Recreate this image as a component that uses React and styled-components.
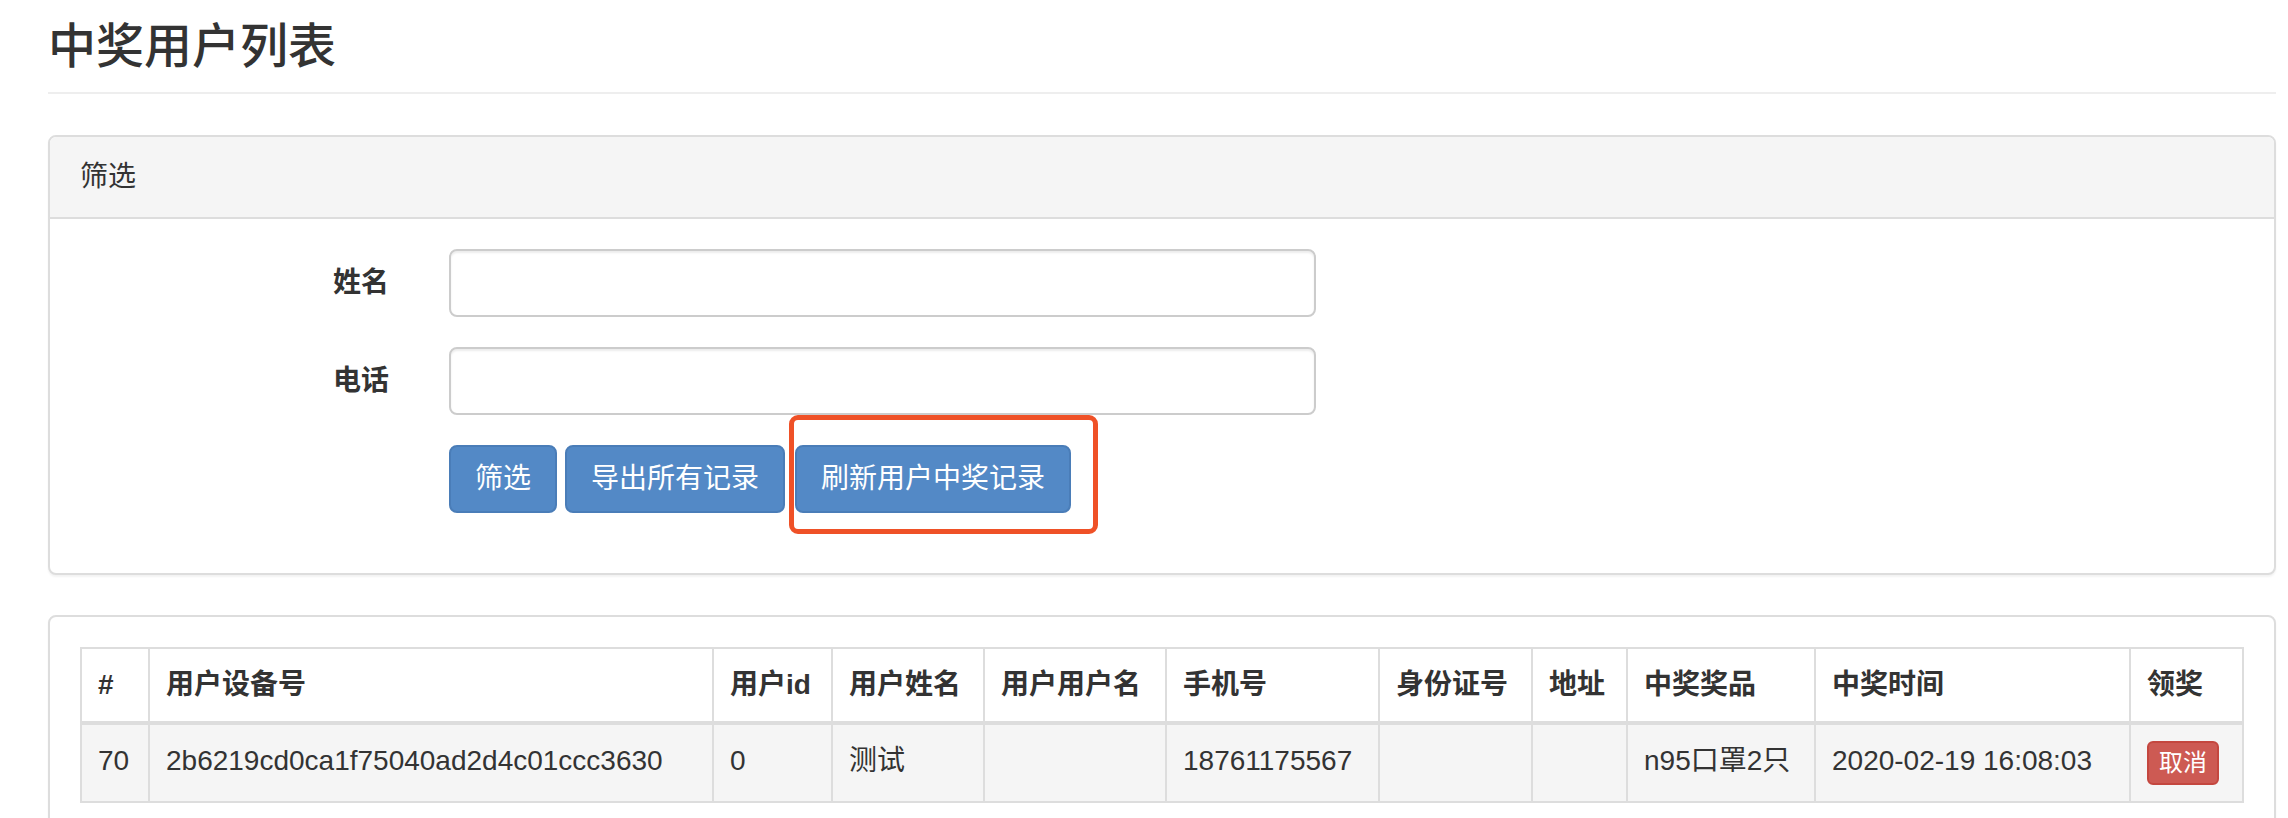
import React from "react";
import styled, { createGlobalStyle } from "styled-components";

const GlobalStyle = createGlobalStyle`
  html, body {
    margin: 0;
    padding: 0;
    background: #fff;
  }
  body {
    font-family: "Liberation Sans", "Noto Sans CJK SC", sans-serif;
    font-size: 28px;
    line-height: 40px;
    color: #333;
  }
  * {
    box-sizing: border-box;
  }
`;

const Page = styled.div`
  padding: 20px 12px 0 48px;
`;

const PageHeader = styled.h3`
  margin: 0 0 41px;
  padding-bottom: 19px;
  border-bottom: 2px solid #eee;
  font-size: 48px;
  line-height: 53px;
  font-weight: 500;
  color: #333;
`;

const Panel = styled.div`
  background: #fff;
  border: 2px solid #ddd;
  border-radius: 8px;
  box-shadow: 0 2px 2px rgba(0, 0, 0, 0.05);
  margin-bottom: 40px;
`;

const PanelHeading = styled.div`
  padding: 20px 30px;
  background: #f5f5f5;
  border-bottom: 2px solid #ddd;
  border-radius: 6px 6px 0 0;
`;

const PanelBody = styled.div`
  padding: 30px;
`;

const FormRow = styled.div`
  display: flex;
  align-items: center;
  margin-bottom: 30px;
`;

const Label = styled.label`
  width: 309px;
  text-align: right;
  font-weight: 700;
`;

const Input = styled.input`
  margin-left: 60px;
  width: 867px;
  height: 68px;
  padding: 12px 24px;
  font: inherit;
  color: #555;
  background: #fff;
  border: 2px solid #ccc;
  border-radius: 8px;
  box-shadow: inset 0 2px 2px rgba(0, 0, 0, 0.075);
  outline: none;
`;

const Actions = styled.div`
  display: flex;
  gap: 8px;
  margin-left: 369px;
  margin-bottom: 30px;
`;

const Button = styled.button`
  height: 68px;
  padding: 12px 24px;
  font: inherit;
  line-height: 40px;
  color: #fff;
  background: #5389c6;
  border: 2px solid #4a7db8;
  border-radius: 8px;
  cursor: pointer;
  white-space: nowrap;
`;

const Highlight = styled.div`
  position: relative;
  margin-left: 2px;

  &::after {
    content: "";
    position: absolute;
    left: -6px;
    right: -27px;
    top: -30px;
    bottom: -21px;
    border: 5px solid #ef5127;
    border-radius: 9px;
    pointer-events: none;
  }
`;

const Table = styled.table`
  width: 100%;
  table-layout: fixed;
  border-collapse: collapse;
  border: 2px solid #ddd;
`;

const Col = styled.col`
  width: ${(p) => p.$w}px;
`;

const Th = styled.th`
  padding: 16px;
  text-align: left;
  vertical-align: bottom;
  font-weight: 700;
  border: 2px solid #ddd;
  border-bottom-width: 4px;
  white-space: nowrap;
  overflow: hidden;
`;

const Row = styled.tr`
  background: #f5f5f5;
`;

const Td = styled.td`
  padding: 16px;
  vertical-align: top;
  border: 2px solid #ddd;
  white-space: nowrap;
  overflow: hidden;
`;

const SmallDanger = styled.button`
  display: inline-block;
  height: 44px;
  padding: 2px 10px;
  font: inherit;
  font-size: 24px;
  line-height: 36px;
  color: #fff;
  background: #cd5a53;
  border: 2px solid #c4473f;
  border-radius: 6px;
  vertical-align: top;
  cursor: pointer;
`;

const columns = [
  { title: "#", w: 68 },
  { title: "用户设备号", w: 564 },
  { title: "用户id", w: 119 },
  { title: "用户姓名", w: 152 },
  { title: "用户用户名", w: 182 },
  { title: "手机号", w: 213 },
  { title: "身份证号", w: 153 },
  { title: "地址", w: 95 },
  { title: "中奖奖品", w: 188 },
  { title: "中奖时间", w: 315 },
  { title: "领奖", w: 113 },
];

const winners = [
  {
    id: 70,
    device: "2b6219cd0ca1f75040ad2d4c01ccc3630",
    userId: 0,
    name: "测试",
    username: "",
    phone: "18761175567",
    idCard: "",
    address: "",
    prize: "n95口罩2只",
    time: "2020-02-19 16:08:03",
  },
];

const App = () => (
  <Page>
    <GlobalStyle />
    <PageHeader>中奖用户列表</PageHeader>

    <Panel>
      <PanelHeading>筛选</PanelHeading>
      <PanelBody>
        <FormRow>
          <Label>姓名</Label>
          <Input type="text" />
        </FormRow>
        <FormRow>
          <Label>电话</Label>
          <Input type="text" />
        </FormRow>
        <Actions>
          <Button>筛选</Button>
          <Button>导出所有记录</Button>
          <Highlight>
            <Button>刷新用户中奖记录</Button>
          </Highlight>
        </Actions>
      </PanelBody>
    </Panel>

    <Panel>
      <PanelBody>
        <Table>
          <colgroup>
            {columns.map((c) => (
              <Col key={c.title} $w={c.w} />
            ))}
          </colgroup>
          <thead>
            <tr>
              {columns.map((c) => (
                <Th key={c.title}>{c.title}</Th>
              ))}
            </tr>
          </thead>
          <tbody>
            {winners.map((u) => (
              <Row key={u.id}>
                <Td>{u.id}</Td>
                <Td>{u.device}</Td>
                <Td>{u.userId}</Td>
                <Td>{u.name}</Td>
                <Td>{u.username}</Td>
                <Td>{u.phone}</Td>
                <Td>{u.idCard}</Td>
                <Td>{u.address}</Td>
                <Td>{u.prize}</Td>
                <Td>{u.time}</Td>
                <Td>
                  <SmallDanger>取消</SmallDanger>
                </Td>
              </Row>
            ))}
          </tbody>
        </Table>
      </PanelBody>
    </Panel>
  </Page>
);

export default App;
